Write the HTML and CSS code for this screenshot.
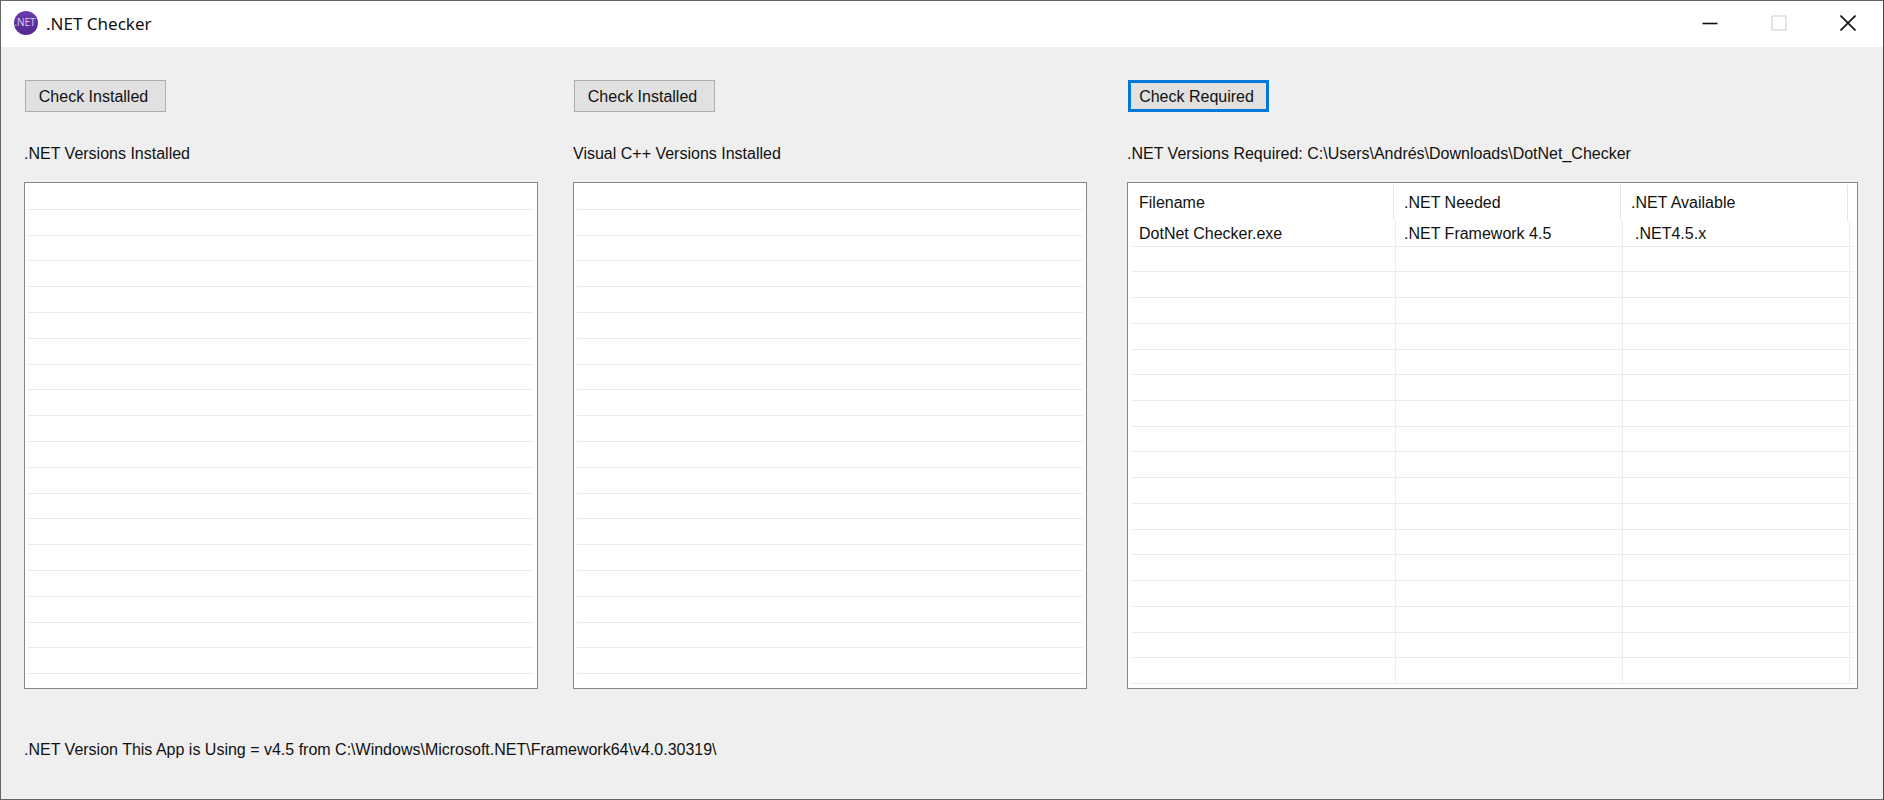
FILE: index.html
```html
<!doctype html>
<html lang="en">
<head>
  <meta charset="utf-8" />
  <title>.NET Checker</title>
  <link rel="stylesheet" href="styles.css">
</head>
<body>
  <div class="window">
    <header class="titlebar">
      <svg class="logo" viewBox="0 0 24 24">
        <defs>
          <linearGradient id="logo-fill" x1="0" y1="0" x2="0" y2="1">
            <stop offset="0" stop-color="#6a3bb0" />
            <stop offset="1" stop-color="#54288f" />
          </linearGradient>
        </defs>
        <circle cx="12" cy="12" r="12" fill="url(#logo-fill)" />
        <text x="11" y="15" text-anchor="middle">.NET</text>
      </svg>
      <h1>.NET Checker</h1>

      <div class="controls">
        <button type="button" aria-label="Minimize">
          <svg viewBox="0 0 16 16"><path d="M0.5 8.5h15" stroke-width="1.6" /></svg>
        </button>
        <button type="button" aria-label="Maximize" disabled>
          <svg viewBox="0 0 16 16"><rect x="1" y="1" width="14" height="14" /></svg>
        </button>
        <button type="button" aria-label="Close">
          <svg viewBox="0 0 16 16"><path d="M0.5 0.5l15 15M15.5 0.5l-15 15" stroke-width="1.6" /></svg>
        </button>
      </div>
    </header>

    <main class="panels">
      <section class="panel">
        <button type="button" class="btn">Check Installed</button>
        <p class="label">.NET Versions Installed</p>
        <div class="box">
          <ul class="list" data-rows="19"></ul>
        </div>
      </section>

      <section class="panel">
        <button type="button" class="btn">Check Installed</button>
        <p class="label">Visual C++ Versions Installed</p>
        <div class="box">
          <ul class="list" data-rows="19"></ul>
        </div>
      </section>

      <section class="panel required">
        <button type="button" class="btn default">Check Required</button>
        <p class="label">.NET Versions Required: C:\Users\Andrés\Downloads\DotNet_Checker</p>
        <div class="box">
          <table>
            <colgroup>
              <col class="col-file">
              <col class="col-net">
              <col class="col-net">
              <col>
            </colgroup>
            <thead>
              <tr>
                <th>Filename</th>
                <th>.NET Needed</th>
                <th>.NET Available</th>
                <td></td>
              </tr>
            </thead>
            <tbody id="results" data-rows="17">
              <tr>
                <td>DotNet Checker.exe</td>
                <td>.NET Framework 4.5</td>
                <td class="available">.NET4.5.x</td>
                <td></td>
              </tr>
            </tbody>
          </table>
        </div>
      </section>
    </main>

    <footer class="status">
      <p class="label">.NET Version This App is Using = v4.5 from C:\Windows\Microsoft.NET\Framework64\v4.0.30319\</p>
    </footer>
  </div>

  <script>
    // empty grid lines
    document.querySelectorAll('.list').forEach(list => {
      for (let i = 0; i < list.dataset.rows; i++) {
        list.appendChild(document.createElement('li'));
      }
    });

    const results = document.getElementById('results');
    for (let i = 0; i < results.dataset.rows; i++) {
      const row = results.insertRow();
      for (let c = 0; c < 4; c++) row.insertCell();
    }
  </script>
</body>
</html>
```
FILE: styles.css
```css
* {
  box-sizing: border-box;
}

body {
  margin: 0;
  height: 100vh;
  font-family: "Liberation Sans", Arial, sans-serif;
  font-size: 16px;
  line-height: 20px;
  color: #111;
}

.window {
  display: flex;
  flex-direction: column;
  height: 100%;
  background: #efefef;
  border: 1px solid #666;
  border-right-color: #444;
}

.titlebar {
  display: flex;
  align-items: center;
  height: 46px;
  padding-left: 13px;
  background: #fff;
}

.logo {
  width: 24px;
  height: 24px;
  margin-bottom: 2px;
}

.logo text {
  font-family: "Open Sans", sans-serif;
  font-size: 10px;
  fill: #dccdf0;
}

h1 {
  margin: 0 auto 0 8px;
  font-family: "Noto Sans", sans-serif;
  font-size: 17px;
  font-weight: normal;
}

.controls {
  display: flex;
  height: 44px;
  align-self: flex-start;
  margin-right: 1px;
}

.controls button {
  display: flex;
  align-items: center;
  justify-content: center;
  width: 69px;
  padding: 0;
  border: 0;
  background: none;
}

.controls svg {
  width: 16px;
  height: 16px;
  fill: none;
  stroke: #111;
}

.controls button:disabled svg {
  stroke: #ccc;
}

.panels {
  display: flex;
  flex: 1;
  min-height: 0;
  padding: 33px 25px 0 23px;
}

.panel {
  display: flex;
  flex-direction: column;
  flex: 514 1 0;
  min-width: 0;
}

.panel + .panel {
  margin-left: 35px;
}

.panel.required {
  flex-grow: 731;
  margin-left: 40px;
}

.btn {
  align-self: flex-start;
  width: 141px;
  height: 32px;
  margin-left: 1px;
  padding: 2px 4px 0 0;
  font: inherit;
  color: inherit;
  background: #e1e1e1;
  border: 1px solid #adadad;
}

.btn.default {
  border: 3px solid #0078d7;
}

.label {
  margin: 0;
}

.panel .label {
  margin: 32px 0 18px;
}

.box {
  flex: 1;
  min-height: 0;
  padding: 0 3px;
  background: #fff;
  border: 1px solid #828790;
}

.list {
  display: flex;
  flex-direction: column;
  height: 100%;
  margin: 0;
  padding: 1px 0 14px;
  list-style: none;
}

.list li {
  flex: 1;
  border-bottom: 1px solid #ececec;
}

table {
  width: 100%;
  height: calc(100% - 4px);
  table-layout: fixed;
  border-collapse: separate;
  border-spacing: 0;
}

.col-file {
  width: 265px;
}

.col-net {
  width: 227px;
}

thead tr {
  height: 38px;
}

/* equal heights, so spare room is shared out evenly */
tbody tr {
  height: 25px;
}

th,
td {
  padding: 2px 8px 0;
  font-weight: normal;
  text-align: left;
  white-space: nowrap;
}

/* header separators stop just left of the grid lines */
th {
  background: linear-gradient(#e5e5e5, #e5e5e5) right 2px bottom / 1px 36px no-repeat;
}

tbody td {
  border-right: 1px solid #ececec;
  border-bottom: 1px solid #ececec;
}

tbody td:last-child {
  padding: 0;
  border-right: 0;
}

thead td {
  padding: 0;
}

tbody .available {
  padding-left: 12px;
}

.status {
  height: 110px;
  padding: 51px 24px 0 23px;
}
```
